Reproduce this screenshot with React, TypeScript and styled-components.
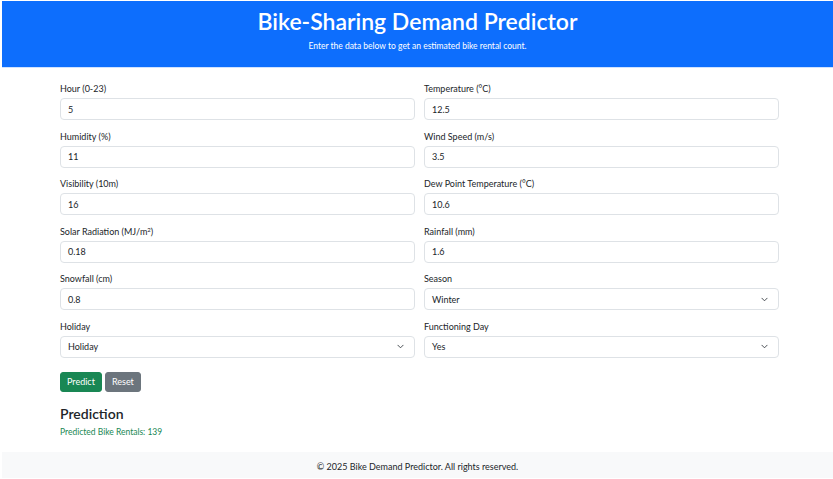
import React from "react";
import styled, { createGlobalStyle } from "styled-components";

const Global = createGlobalStyle`
  html, body { margin: 0; padding: 0; background: #fff; }
  body { font-family: Lato, "Open Sans", sans-serif; color: #212529; }
  #root { padding: 1px 0 0 2px; }
  * { box-sizing: border-box; }
`;

const Page = styled.div`
  display: flex;
  flex-direction: column;
  min-height: 477px;
`;

const Header = styled.header`
  background: #0d6efd;
  color: #fff;
  height: 67px;
  display: flex;
  flex-direction: column;
  align-items: center;
  padding-top: 6px;
  border-bottom: 1px solid #cfe2ff;
`;

const Title = styled.h1`
  margin: 0;
  font-size: 23px;
  font-weight: 600;
  line-height: 28px;
`;

const Subtitle = styled.p`
  margin: 5px 0 0;
  font-size: 8.5px;
  line-height: 12px;
`;

const Main = styled.main`
  flex: 1;
  padding: 14px 54px 0 58px;
`;

const Form = styled.form`
  display: grid;
  grid-template-columns: 1fr 1fr;
  column-gap: 9px;
  row-gap: 9.5px;
`;

const Field = styled.div`
  display: flex;
  flex-direction: column;
`;

const Label = styled.label`
  font-size: 9px;
  line-height: 13px;
  height: 13px;
  margin-bottom: 3px;
  color: #212529;
  sup {
    font-size: 6px;
    line-height: 0;
    vertical-align: 3px;
  }
`;

const Input = styled.div`
  height: 22px;
  border: 1px solid #dee2e6;
  border-radius: 4px;
  padding: 0 7px;
  font-size: 9px;
  display: flex;
  align-items: center;
  justify-content: space-between;
  color: #212529;
  background: #fff;
`;

const Chevron = styled.svg`
  width: 7px;
  height: 7px;
  margin-right: 3px;
`;

const Buttons = styled.div`
  display: flex;
  gap: 3px;
  margin-top: 14px;
`;

const Button = styled.button<{ $variant: "success" | "secondary" }>`
  background: ${(p) => (p.$variant === "success" ? "#198754" : "#6c757d")};
  color: #fff;
  border: 1px solid ${(p) => (p.$variant === "success" ? "#198754" : "#6c757d")};
  border-radius: 3px;
  font-family: inherit;
  font-size: 9px;
  height: 20px;
  padding: 0 6px;
`;

const ResultTitle = styled.h2`
  margin: 13px 0 0;
  font-size: 14px;
  font-weight: 600;
  line-height: 18px;
`;

const ResultText = styled.p`
  margin: 3px 0 0;
  font-size: 8.5px;
  line-height: 12px;
  color: #198754;
`;

const Footer = styled.footer`
  background: #f8f9fa;
  height: 26px;
  display: flex;
  align-items: center;
  justify-content: center;
  font-size: 9px;
  padding-top: 3px;
`;

type F = { label: React.ReactNode; value: string; select?: boolean };

const fields: F[] = [
  { label: "Hour (0-23)", value: "5" },
  { label: "Temperature (°C)", value: "12.5" },
  { label: "Humidity (%)", value: "11" },
  { label: "Wind Speed (m/s)", value: "3.5" },
  { label: "Visibility (10m)", value: "16" },
  { label: "Dew Point Temperature (°C)", value: "10.6" },
  { label: <>Solar Radiation (MJ/m<sup>2</sup>)</>, value: "0.18" },
  { label: "Rainfall (mm)", value: "1.6" },
  { label: "Snowfall (cm)", value: "0.8" },
  { label: "Season", value: "Winter", select: true },
  { label: "Holiday", value: "Holiday", select: true },
  { label: "Functioning Day", value: "Yes", select: true },
];

export default function App() {
  return (
    <>
      <Global />
      <Page>
        <Header>
          <Title>Bike-Sharing Demand Predictor</Title>
          <Subtitle>Enter the data below to get an estimated bike rental count.</Subtitle>
        </Header>
        <Main>
          <Form>
            {fields.map((f, i) => (
              <Field key={i}>
                <Label>{f.label}</Label>
                <Input>
                  <span>{f.value}</span>
                  {f.select && (
                    <Chevron viewBox="0 0 16 16">
                      <path d="M2 5l6 6 6-6" fill="none" stroke="#343a40" strokeWidth="2" strokeLinecap="round" strokeLinejoin="round" />
                    </Chevron>
                  )}
                </Input>
              </Field>
            ))}
          </Form>
          <Buttons>
            <Button $variant="success" type="button">Predict</Button>
            <Button $variant="secondary" type="button">Reset</Button>
          </Buttons>
          <ResultTitle>Prediction</ResultTitle>
          <ResultText>Predicted Bike Rentals: 139</ResultText>
        </Main>
        <Footer>© 2025 Bike Demand Predictor. All rights reserved.</Footer>
      </Page>
    </>
  );
}
